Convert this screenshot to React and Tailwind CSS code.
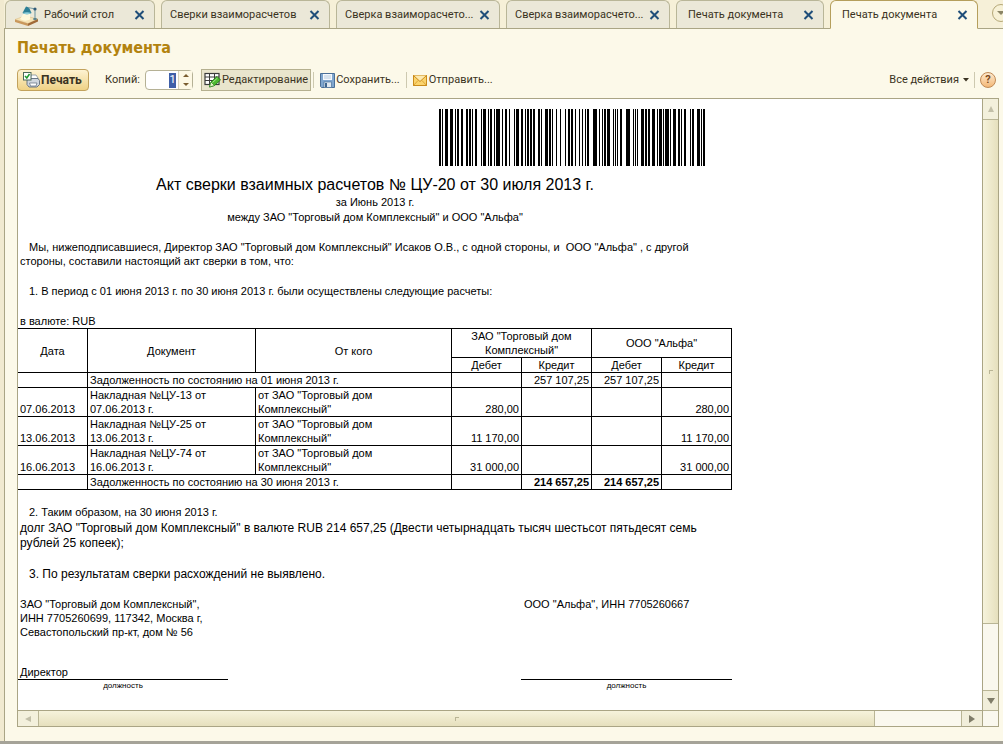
import React, { useState } from 'react';

const tabs = [
  { id: 1, title: 'Рабочий стол', size: 'w-[150px] pl-2', desk: true },
  { id: 2, title: 'Сверки взаиморасчетов', size: 'w-[169px] pl-2' },
  { id: 3, title: 'Сверка взаиморасчето...', size: 'w-[164px] pl-2' },
  { id: 4, title: 'Сверка взаиморасчето...', size: 'w-[164px] pl-2' },
  { id: 5, title: 'Печать документа', size: 'w-[148px] pl-[11px]' },
  { id: 6, title: 'Печать документа', size: 'w-[148px] pl-[11px]' },
];

const rows = [
  { date: '07.06.2013', doc: 'Накладная №ЦУ-13 от 07.06.2013 г.', amount: '280,00' },
  { date: '13.06.2013', doc: 'Накладная №ЦУ-25 от 13.06.2013 г.', amount: '11 170,00' },
  { date: '16.06.2013', doc: 'Накладная №ЦУ-74 от 16.06.2013 г.', amount: '31 000,00' },
];

// [x, width] of each bar
const bars = [
  [0, 2], [3, 1], [6, 3], [11, 3], [16, 1], [18, 2], [22, 2], [27, 2], [30, 2], [33, 1], [36, 2],
  [42, 1], [44, 3], [49, 1], [51, 2], [55, 1], [57, 4], [63, 1], [66, 2], [70, 1], [75, 1], [77, 3],
  [82, 2], [86, 1], [88, 2], [91, 2], [94, 2], [99, 2], [102, 1], [106, 3], [110, 2], [113, 1],
  [117, 1], [121, 1], [126, 1], [129, 2], [132, 2], [136, 1], [140, 1], [143, 1], [146, 1], [148, 2],
  [154, 4], [160, 1], [163, 1], [165, 2], [168, 3], [174, 1], [176, 1], [178, 1], [181, 2], [187, 4],
  [194, 1], [196, 1], [198, 1], [202, 3], [206, 2], [209, 2], [213, 3], [218, 1], [220, 3], [224, 1],
  [226, 4], [231, 1], [234, 3], [239, 2], [242, 1], [245, 2], [251, 1], [253, 2], [258, 3], [262, 1],
  [264, 2],
];

const DeskIcon = () => (
  <svg width="26" height="22" viewBox="0 0 26 22" className="shrink-0">
    <path d="M1 14.500 L11 11 L24 14 L14 18.500 Z" fill="#f6e3b4" stroke="#dcc08a" strokeWidth="0.6" />
    <path d="M1 14.500 L14 18.500 V21 L1 17 Z" fill="#c9985c" />
    <path d="M14 18.500 L24 14 V16.500 L14 21 Z" fill="#a06a38" />
    <path d="M10 8 L6 14 Q11 17 16 14.500 L16 8 Z" fill="#fffbe0" opacity="0.9" />
    <path d="M12 1.500 L15 2.500 L17.500 8 Q13 10.500 8.500 8 Z" fill="#2b7f96" />
    <path d="M8.500 8 Q13 10.500 17.500 8 Q13 6.500 8.500 8 Z" fill="#8fd0dc" />
    <path d="M14 2.500 L21 4 V14" fill="none" stroke="#7fa0a8" strokeWidth="1.200" />
    <circle cx="21" cy="4" r="1.600" fill="#2f5a78" />
    <ellipse cx="21" cy="14" rx="2" ry="1" fill="#557f8c" />
  </svg>
);

const CloseIcon = () => (
  <svg width="11" height="10" viewBox="0 0 11 10">
    <path d="M1.500 1 L9.500 9 M9.500 1 L1.500 9" stroke="#1f4e79" strokeWidth="2" />
  </svg>
);

const PrintIcon = () => (
  <svg width="17" height="16" viewBox="0 0 17 16" className="shrink-0">
    <path d="M8 3 h5 l2 3 v3 H7 Z" fill="#ffffff" stroke="#8090a0" strokeWidth="0.8" />
    <path d="M4 8 L6 6.500 H15 L16.500 8.500 V12.500 L14 15 H6 L4 12.500 Z" fill="#cfd6de" stroke="#5c6b7c" strokeWidth="0.9" />
    <path d="M6.500 11 H14 L13 14 H7.500 Z" fill="#fff" stroke="#5c6b7c" strokeWidth="0.7" />
    <rect x="0.5" y="0.5" width="7.500" height="7.500" fill="#fff" stroke="#4d6b5a" />
    <path d="M2 4 L3.800 6 L6.500 2" fill="none" stroke="#1e9a2f" strokeWidth="1.500" />
  </svg>
);

const EditIcon = () => (
  <svg width="17" height="16" viewBox="0 0 17 16" className="shrink-0">
    <rect x="1" y="1.500" width="14" height="11" fill="#fff" stroke="#3b3b3b" strokeWidth="1.200" />
    <path d="M1 5 H15 M1 8.500 H15 M5.500 1.500 V12.500 M10.500 1.500 V12.500" stroke="#3b3b3b" />
    <path d="M5.500 15 L7 10 L13 4.500 L16.500 8 L10.500 13.500 Z" fill="#4cb82f" stroke="#1f7d14" strokeWidth="0.9" />
    <path d="M8.500 10.500 L13.500 6" stroke="#a6e58c" />
    <path d="M5.500 15 L7 10 L10.500 13.500 Z" fill="#e6f5c8" stroke="#1f7d14" strokeWidth="0.6" />
  </svg>
);

const SaveIcon = () => (
  <svg width="15" height="15" viewBox="0 0 15 15" className="shrink-0">
    <path d="M0.500 0.500 H14.500 V14.500 H1.500 L0.500 13.500 Z" fill="#7fa6cf" stroke="#4a6f97" />
    <rect x="3" y="1" width="9" height="6" fill="#f4f8fc" />
    <path d="M4 3 H11 M4 5 H11" stroke="#a9bfd6" strokeWidth="0.8" />
    <rect x="4" y="9" width="7.500" height="5.500" fill="#dfe8f0" stroke="#3d658f" strokeWidth="0.6" />
    <rect x="5" y="10" width="2" height="4" fill="#3d658f" />
  </svg>
);

const MailIcon = () => (
  <svg width="14" height="11" viewBox="0 0 14 11" className="shrink-0">
    <rect x="0.5" y="0.5" width="13" height="10" fill="#fbd46c" stroke="#c98b1a" />
    <path d="M0.500 10.500 L5 5.500 M13.500 10.500 L9 5.500" stroke="#d79a2b" strokeWidth="0.8" />
    <path d="M0.500 0.500 L7 6.500 L13.500 0.500" fill="#fdeab0" stroke="#c98b1a" />
  </svg>
);

const Arrow = ({ d, color }) => (
  <svg width="8" height="8" viewBox="0 0 8 8">
    <path d={d} fill={color} />
  </svg>
);

const Separator = () => <div className="h-4 w-px bg-[#cdc9b0]" />;

const App = () => {
  const [activeTab, setActiveTab] = useState(6);
  const [copies, setCopies] = useState('1');

  return (
    <div className="flex min-h-screen flex-col overflow-hidden border-b-[3px] border-[#a5a398] bg-[#f1ead0] pl-1 font-[Roboto,sans-serif] text-[11px] text-[#3a3322]">
      {/* Tabs */}
      <div className="flex h-[29px] shrink-0 items-end gap-1.5 border-b border-[#aaa585] bg-[#f6f0d8] pl-px">
        {tabs.map((tab) => (
          <div
            key={tab.id}
            className={`flex shrink-0 items-center justify-between rounded-t-md border pr-[9px] ${tab.size} ${
              activeTab === tab.id
                ? 'relative -mb-px h-[29px] border-[#b59f5c] border-b-[#fcf9e9] bg-[#fcf9e9]'
                : 'h-7 border-[#b9b698] border-b-0 bg-[#ebe8d8]'
            }`}
          >
            <button onClick={() => setActiveTab(tab.id)} className="flex items-center gap-1 whitespace-nowrap pt-0.5">
              {tab.desk && <DeskIcon />}
              {tab.title}
            </button>
            <button aria-label="Закрыть">
              <CloseIcon />
            </button>
          </div>
        ))}
        <button
          aria-label="Список окон"
          className="mb-1.5 ml-2 flex h-[18px] w-[18px] shrink-0 items-center justify-center rounded-full border border-[#b5a878] bg-[#f7f1d6]"
        >
          <Arrow d="M0 2 H8 L4 6 Z" color="#8b8566" />
        </button>
      </div>

      <div className="flex flex-1 flex-col border-l border-[#aaa585] bg-[#fcf9e9] pb-3.5 pl-3 pr-1">
        <h1 className="mt-[7px] font-['DejaVu_Sans_Condensed','DejaVu_Sans',sans-serif] text-[16px] font-bold leading-6 text-[#b3830f]">
          Печать документа
        </h1>

        {/* Toolbar */}
        <div className="mt-[9px] flex h-[22px] items-center">
          <button className="flex h-[22px] w-[72px] items-center gap-px rounded border border-[#c2a25c] bg-linear-to-b from-[#fdf3d2] to-[#efd285] pl-[5px] text-[12px] font-bold">
            <PrintIcon />
            Печать
          </button>
          <label htmlFor="copies" className="ml-4 w-[33px] whitespace-nowrap">
            Копий:
          </label>
          <div className="ml-[7px] flex h-5 w-12 items-center rounded border border-[#b5b195] bg-white">
            <div className="flex flex-1 justify-end pr-0.5">
              <input
                id="copies"
                value={copies}
                onChange={(e) => setCopies(e.target.value)}
                className="h-[15px] w-[7px] bg-[#3f5fa8] text-center text-white outline-none"
              />
            </div>
            <div className="flex h-full w-3.5 flex-col items-center justify-center border-l border-[#d8d4bc] bg-[#fdf8e4]">
              <button aria-label="Больше">
                <Arrow d="M1 5 H7 L4 2 Z" color="#7a5c2e" />
              </button>
              <button aria-label="Меньше">
                <Arrow d="M1 3 H7 L4 6 Z" color="#7a5c2e" />
              </button>
            </div>
          </div>
          <button className="ml-2 flex h-[22px] items-center gap-px border border-[#b5b08f] bg-[#e9e5cd] px-0.5">
            <EditIcon />
            Редактирование
          </button>
          <div className="ml-0.5 flex items-center gap-1.5">
            <Separator />
            <button className="flex items-center gap-px">
              <SaveIcon />
              Сохранить...
            </button>
            <Separator />
            <button className="flex items-center gap-0.5">
              <MailIcon />
              Отправить...
            </button>
          </div>
          <div className="ml-auto flex items-center gap-[5px]">
            <button className="flex items-center gap-1">
              Все действия
              <svg width="6" height="4" viewBox="0 0 6 4">
                <path d="M0 0 H6 L3 3.500 Z" fill="#3a3322" />
              </svg>
            </button>
            <Separator />
            <button
              aria-label="Справка"
              className="mr-[3px] flex h-4 w-4 items-center justify-center rounded-full border border-[#c08a55] bg-linear-to-b from-[#fde9cc] to-[#f3b877] font-bold text-[#7a4a1c]"
            >
              ?
            </button>
          </div>
        </div>

        {/* Document */}
        <div className="mt-[7px] flex flex-1 border border-[#aaa585]">
          <div className="flex flex-1 flex-col bg-white">
            <div className="w-[714px] flex-1 font-['Liberation_Sans',Arial,sans-serif] leading-[14px] text-black">
              <svg width="267" height="57" className="ml-[421px] mt-2.5" shapeRendering="crispEdges">
                {bars.map(([x, w]) => (
                  <rect key={x} x={x} y="0" width={w} height="57" />
                ))}
              </svg>
              <h2 className="mt-[9px] text-center text-[16px] leading-5">
                Акт сверки взаимных расчетов № ЦУ-20 от 30 июля 2013 г.
              </h2>
              <p className="text-center leading-[15px]">за Июнь 2013 г.</p>
              <p className="text-center leading-[15px]">между ЗАО "Торговый дом Комплексный" и ООО "Альфа"</p>
              <p className="mt-[15px] pl-0.5 pr-5 indent-[9px]">
                Мы, нижеподписавшиеся, Директор ЗАО "Торговый дом Комплексный" Исаков О.В., с одной стороны, и&nbsp; ООО
                "Альфа" , с другой стороны, составили настоящий акт сверки в том, что:
              </p>
              <p className="mt-4 pl-[11px]">
                1. В период с 01 июня 2013 г. по 30 июня 2013 г. были осуществлены следующие расчеты:
              </p>
              <p className="mt-4 pl-0.5">в валюте: RUB</p>

              <table className="w-full table-fixed border-separate border-spacing-0 border-t border-black [&_td]:border-b [&_td]:border-r [&_td]:border-black [&_td]:px-0.5 [&_td]:py-0 [&_th]:border-b [&_th]:border-r [&_th]:border-black [&_th]:p-0 [&_th]:font-normal">
                <colgroup>
                  <col className="w-[70px]" />
                  <col className="w-[168px]" />
                  <col className="w-[196px]" />
                  <col className="w-[70px]" />
                  <col className="w-[70px]" />
                  <col className="w-[70px]" />
                  <col className="w-[70px]" />
                </colgroup>
                <thead>
                  <tr>
                    <th rowSpan={2}>Дата</th>
                    <th rowSpan={2}>Документ</th>
                    <th rowSpan={2}>От кого</th>
                    <th colSpan={2}>
                      ЗАО "Торговый дом
                      <br />
                      Комплексный"
                    </th>
                    <th colSpan={2}>ООО "Альфа"</th>
                  </tr>
                  <tr>
                    <th>Дебет</th>
                    <th>Кредит</th>
                    <th>Дебет</th>
                    <th>Кредит</th>
                  </tr>
                </thead>
                <tbody className="text-right">
                  <tr>
                    <td></td>
                    <td colSpan={2} className="text-left">Задолженность по состоянию на 01 июня 2013 г.</td>
                    <td></td>
                    <td>257 107,25</td>
                    <td>257 107,25</td>
                    <td></td>
                  </tr>
                  {rows.map((row) => (
                    <tr key={row.date} className="align-bottom">
                      <td className="text-left">{row.date}</td>
                      <td className="text-left">
                        <div className="w-[130px]">{row.doc}</div>
                      </td>
                      <td className="text-left">
                        <div className="w-[130px]">от ЗАО "Торговый дом Комплексный"</div>
                      </td>
                      <td>{row.amount}</td>
                      <td></td>
                      <td></td>
                      <td>{row.amount}</td>
                    </tr>
                  ))}
                  <tr>
                    <td></td>
                    <td colSpan={2} className="text-left">Задолженность по состоянию на 30 июня 2013 г.</td>
                    <td></td>
                    <td className="font-bold">214 657,25</td>
                    <td className="font-bold">214 657,25</td>
                    <td></td>
                  </tr>
                </tbody>
              </table>

              <p className="mt-[15px] pl-[11px]">2. Таким образом, на 30 июня 2013 г.</p>
              <p className="mt-0.5 pl-0.5 pr-5 text-[12px] leading-[15px]">
                долг ЗАО "Торговый дом Комплексный" в валюте RUB 214 657,25 (Двести четырнадцать тысяч шестьсот пятьдесят
                семь рублей 25 копеек);
              </p>
              <p className="mt-4 pl-[11px] text-[12px] leading-[15px]">3. По результатам сверки расхождений не выявлено.</p>

              <div className="mt-[15px] flex justify-between">
                <div className="w-[210px]">
                  <p className="pl-0.5">
                    ЗАО "Торговый дом Комплексный",
                    <br />
                    ИНН 7705260699, 117342, Москва г,
                    <br />
                    Севастопольский пр-кт, дом № 56
                  </p>
                  <p className="mt-[26px] border-b border-black pl-0.5">Директор</p>
                  <p className="text-center text-[8px] leading-[11px]">должность</p>
                </div>
                <div className="flex w-[211px] flex-col justify-between">
                  <p className="pl-[3px]">ООО "Альфа", ИНН 7705260667</p>
                  <p className="border-t border-black text-center text-[8px] leading-[11px]">должность</p>
                </div>
              </div>
            </div>

            {/* Horizontal scrollbar */}
            <div className="flex h-4 border-t border-[#aaa585] bg-[#faf8ee]">
              <button aria-label="Влево" className="flex w-[21px] items-center justify-center border-r border-[#b9b595] bg-[#f3f0dc]">
                <Arrow d="M7 1 V7 L1 4 Z" color="#c2bfa8" />
              </button>
              <div className="flex flex-1">
                <div className="flex w-[90.7%] items-center justify-center border-r border-[#b9b595] bg-linear-to-b from-[#f6f3dc] to-[#e6e0bd]">
                  <div className="h-1 w-1 border-l border-t border-[#b9b595]" />
                </div>
              </div>
              <button aria-label="Вправо" className="flex w-[21px] items-center justify-center border-l border-[#b9b595] bg-[#f1eeda]">
                <Arrow d="M1 0 V8 L7 4 Z" color="#7f7c68" />
              </button>
            </div>
          </div>

          {/* Vertical scrollbar */}
          <div className="flex w-4 flex-col border-l border-[#aaa585] bg-[#faf8ee]">
            <button aria-label="Вверх" className="flex h-[21px] items-center justify-center border-b border-[#b9b595] bg-[#f3f0dc]">
              <Arrow d="M1 7 H7 L4 1 Z" color="#c2bfa8" />
            </button>
            <div className="flex flex-1 flex-col">
              <div className="flex h-[88.500%] items-center justify-center border-b border-[#b9b595] bg-linear-to-r from-[#f6f3dc] to-[#e6e0bd]">
                <div className="h-1 w-1 border-l border-t border-[#b9b595]" />
              </div>
            </div>
            <button aria-label="Вниз" className="flex h-[21px] items-center justify-center border-y border-[#b9b595] bg-[#f1eeda]">
              <Arrow d="M0 1 H8 L4 7 Z" color="#7f7c68" />
            </button>
            <div className="h-[15px]" />
          </div>
        </div>
      </div>
    </div>
  );
};

export default App;
